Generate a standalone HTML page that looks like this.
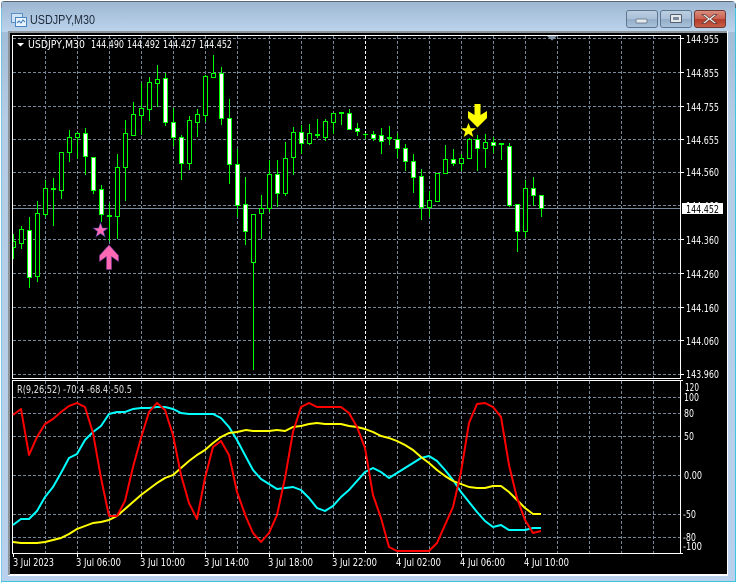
<!DOCTYPE html>
<html><head><meta charset="utf-8"><title>USDJPY,M30</title>
<style>html,body{margin:0;padding:0;background:#fff;width:738px;height:583px;overflow:hidden}svg{display:block}
text{font-family:"DejaVu Sans","Liberation Sans",sans-serif;font-size:10.5px;fill:#fff}</style></head>
<body>
<svg width="738" height="583" viewBox="0 0 738 583" xmlns="http://www.w3.org/2000/svg">
<defs>
<linearGradient id="t" x1="0" y1="0" x2="0" y2="1"><stop offset="0" stop-color="#9db8d3"/><stop offset="1" stop-color="#bdd3ec"/></linearGradient>
<linearGradient id="l" x1="0" y1="0" x2="0" y2="1"><stop offset="0" stop-color="#9db8d3"/><stop offset=".2" stop-color="#b5cce5"/><stop offset="1" stop-color="#b9d1ec"/></linearGradient>
<linearGradient id="b1" x1="0" y1="0" x2="0" y2="1"><stop offset="0" stop-color="#bccfe2"/><stop offset=".5" stop-color="#a9c0d8"/><stop offset=".52" stop-color="#93adc8"/><stop offset="1" stop-color="#aac3dc"/></linearGradient>
<linearGradient id="b2" x1="0" y1="0" x2="0" y2="1"><stop offset="0" stop-color="#dc8f80"/><stop offset=".5" stop-color="#c9604e"/><stop offset=".52" stop-color="#b33a28"/><stop offset="1" stop-color="#c9604a"/></linearGradient>
</defs>
<rect width="738" height="583" fill="#fff"/>
<path d="M1 583V5Q1 1.500 5 1.500H731Q735.500 1.500 735.500 6V581.500H1z" fill="url(#l)" stroke="#3fc3de" stroke-width="1"/>
<path d="M1 8V5Q1 1.500 5 1.500H731Q735.500 1.500 735.500 6V8" fill="none" stroke="#5c6670" stroke-width="1"/>
<rect x="1.500" y="2" width="733.500" height="30" fill="url(#t)"/>
<rect x="0" y="0" width="1" height="583" fill="#fff"/>
<!-- client -->
<rect x="8" y="31" width="720" height="545" fill="#fff"/>
<rect x="8" y="31" width="719" height="2" fill="#8c949c"/>
<rect x="8" y="31" width="2" height="544" fill="#8c949c"/>
<rect x="10" y="33" width="717" height="541" fill="#000"/>
<!-- title -->
<g>
<rect x="11.500" y="13.500" width="11" height="9" fill="#cfe3f5" stroke="#5c8fc4"/>
<rect x="15.500" y="17.500" width="11" height="9" fill="#e8f2fb" stroke="#4a86c4"/>
<path d="M17 23l2-2 2 2 2-3 2 2" fill="none" stroke="#3b78b8"/>
<text x="30" y="24" textLength="65" lengthAdjust="spacingAndGlyphs" style="font-family:'Liberation Sans',sans-serif;font-size:12.500px;fill:#1d2a3a">USDJPY,M30</text>
</g>
<!-- buttons -->
<rect x="626.500" y="10.500" width="31" height="17" rx="2.500" fill="url(#b1)" stroke="#5d7690"/>
<rect x="636" y="19" width="11" height="4" rx="1" fill="#e4e9ee" stroke="#5a6878" stroke-width=".7"/>
<rect x="660.500" y="10.500" width="31" height="17" rx="2.500" fill="url(#b1)" stroke="#5d7690"/>
<rect x="670.500" y="14.500" width="11" height="8" rx="1" fill="#e4e9ee" stroke="#54606c"/>
<rect x="673.500" y="17.500" width="5" height="2" fill="#7a8fa5" stroke="#54606c" stroke-width=".6"/>
<rect x="694.500" y="10.500" width="31" height="17" rx="2.500" fill="url(#b2)" stroke="#6e3a33"/>
<path d="M705 14.500l4.500 3.500 4.500-3.500h3l-5.500 4.500 5.500 4.500h-3l-4.500-3.500-4.500 3.500h-3l5.500-4.500-5.500-4.500z" fill="#f0f0f0" stroke="#5c3a36" stroke-width=".7"/>

<g shape-rendering="crispEdges">
<!-- main grid -->
<path d="M13 38.500H680M13 72.500H680M13 106.500H680M13 139.500H680M13 172.500H680M13 205.500H680M13 239.500H680M13 273.500H680M13 307.500H680M13 340.500H680M13 374.500H680" stroke="#778899" stroke-dasharray="3 2" fill="none"/>
<path d="M45.500 36V378M77.500 36V378M109.500 36V378M141.500 36V378M173.500 36V378M205.500 36V378M237.500 36V378M269.500 36V378M301.500 36V378M333.500 36V378M397.500 36V378M429.500 36V378M461.500 36V378M493.500 36V378M525.500 36V378M557.500 36V378M589.500 36V378M621.500 36V378M653.500 36V378" stroke="#778899" stroke-dasharray="3 2" fill="none"/>
<path d="M365.500 36V378" stroke="#fff" stroke-dasharray="3 2" fill="none"/>
<!-- sub grid -->
<path d="M13 397.500H680M13 413.500H680M13 436.500H680M13 475.500H680M13 514.500H680M13 537.500H680" stroke="#778899" stroke-dasharray="3 2" fill="none"/>
<path d="M45.500 381V553M77.500 381V553M109.500 381V553M141.500 381V553M173.500 381V553M205.500 381V553M237.500 381V553M269.500 381V553M301.500 381V553M333.500 381V553M397.500 381V553M429.500 381V553M461.500 381V553M493.500 381V553M525.500 381V553M557.500 381V553M589.500 381V553M621.500 381V553M653.500 381V553" stroke="#778899" stroke-dasharray="3 2" fill="none"/>
<path d="M365.500 381V553" stroke="#fff" stroke-dasharray="3 2" fill="none"/>
<!-- bid line -->
<path d="M13 208.500H680" stroke="#778899"/>
<!-- wicks -->
<path fill="none" stroke="#00ff00" d="M13.500 234V259M21.500 226V249M29.500 217V288M37.500 201V282M45.500 180V217M53.500 178V226M61.500 152V199M69.500 130V162M77.500 132V159M85.500 128V175M93.500 157V194M101.500 185V222M109.500 203V241M117.500 154V239M125.500 120V201M133.500 102V135M141.500 83V135M149.500 77V121M157.500 65V107M165.500 73V126M173.500 108V146M181.500 135V180M189.500 116V170M197.500 109V137M205.500 75V122M213.500 55V77M221.500 67V125M229.500 99V184M237.500 149V217M245.500 177V245M253.500 214V370M261.500 195V239M269.500 160V212M277.500 160V207M285.500 142V196M293.500 127V175M301.500 125V154M309.500 124V145M317.500 119V138M325.500 119V141M333.500 113V134M341.500 113V125M349.500 109V130M357.500 123V136M365.500 133V139M373.500 131V141M381.500 128V154M389.500 126V145M397.500 133V158M405.500 144V171M413.500 154V193M421.500 169V220M429.500 191V217M437.500 173V201M445.500 145V174M453.500 149V166M461.500 154V171M469.500 138V159M477.500 135V171M485.500 134V168M493.500 137V153M501.500 145V160M509.500 143V207M517.500 204V252M525.500 180V238M533.500 177V206M541.500 195V217"/>
<!-- doji dashes -->
<path fill="none" stroke="#00ff00" d="M107 215.500h5M107 216.500h5M315 135.500h5M315 134.500h5M339 112.500h5M339 113.500h5M363 134.500h5M387 138.500h5M387 137.500h5M499 144.500h5M499 143.500h5"/>
<path fill="none" stroke="#00ff00" d="M51 188.500h5M51 189.500h5"/>
<!-- hollow bodies -->
<path fill="#000" stroke="#00ff00" d="M13.500 241.500h2V247.500h-2M19.500 229.500h4V243.500h-4zM35.500 213.500h4V276.500h-4zM43.500 188.500h4V214.500h-4zM59.500 152.500h4V190.500h-4zM67.500 137.500h4V152.500h-4zM75.500 133.500h4V137.500h-4zM115.500 167.500h4V216.500h-4zM123.500 133.500h4V167.500h-4zM131.500 114.500h4V135.500h-4zM139.500 108.500h4V115.500h-4zM147.500 82.500h4V109.500h-4zM155.500 79.500h4V83.500h-4zM187.500 120.500h4V163.500h-4zM195.500 114.500h4V122.500h-4zM203.500 76.500h4V115.500h-4zM211.500 73.500h4V77.500h-4zM251.500 214.500h4V262.500h-4zM259.500 208.500h4V213.500h-4zM267.500 174.500h4V208.500h-4zM283.500 158.500h4V193.500h-4zM291.500 132.500h4V157.500h-4zM307.500 133.500h4V143.500h-4zM323.500 121.500h4V137.500h-4zM331.500 113.500h4V122.500h-4zM427.500 200.500h4V207.500h-4zM435.500 173.500h4V201.500h-4zM443.500 159.500h4V173.500h-4zM459.500 158.500h4V163.500h-4zM467.500 139.500h4V158.500h-4zM483.500 142.500h4V148.500h-4zM523.500 188.500h4V231.500h-4z"/>
<!-- white bodies -->
<path fill="#fff" stroke="#00ff00" d="M27.500 230.500h4V277.500h-4zM83.500 133.500h4V156.500h-4zM91.500 157.500h4V190.500h-4zM99.500 189.500h4V214.500h-4zM163.500 78.500h4V122.500h-4zM171.500 122.500h4V137.500h-4zM179.500 137.500h4V163.500h-4zM219.500 73.500h4V118.500h-4zM227.500 118.500h4V164.500h-4zM235.500 164.500h4V205.500h-4zM243.500 204.500h4V231.500h-4zM275.500 174.500h4V193.500h-4zM299.500 132.500h4V143.500h-4zM347.500 113.500h4V129.500h-4zM355.500 128.500h4V131.500h-4zM371.500 134.500h4V138.500h-4zM379.500 135.500h4V141.500h-4zM395.500 139.500h4V148.500h-4zM403.500 148.500h4V161.500h-4zM411.500 161.500h4V177.500h-4zM419.500 176.500h4V207.500h-4zM451.500 159.500h4V163.500h-4zM475.500 139.500h4V148.500h-4zM491.500 142.500h4V145.500h-4zM507.500 146.500h4V205.500h-4zM515.500 204.500h4V231.500h-4zM531.500 188.500h4V195.500h-4zM539.500 195.500h4V208.500h-4z"/>
<!-- frames -->
<path fill="none" stroke="#fff" d="M12.500 35.500H680.500V378.500H12.500zM12.500 380.500H680.500V553.500H12.500z"/>
<!-- ticks -->
<path fill="none" stroke="#fff" d="M681 38.500h3M681 72.500h3M681 106.500h3M681 139.500h3M681 172.500h3M681 239.500h3M681 273.500h3M681 307.500h3M681 340.500h3M681 374.500h3M681 380.500h2M681 553.500h2M13.500 554v3M77.500 554v3M141.500 554v3M205.500 554v3M269.500 554v3M333.500 554v3M397.500 554v3M461.500 554v3M525.500 554v3"/>
</g>
<!-- gray top marker -->
<path d="M547 36h10l-5 4.500z" fill="#8494a6"/>
<!-- indicators -->
<g fill="none" stroke-width="2" stroke-linejoin="round">
<polyline stroke="#00ffff" points="13,525 21,519 29,519 37,511 45,497 53,487 61,473 69,458 77,454 85,440 93,432 101,426 109,414 117,412 125,412 133,409 141,408 149,408 157,407 165,407 173,409 181,413 189,414 197,414 205,414 213,414 221,418 229,427 237,440 246,457 253,470 261,479 269,484 277,489 285,488 293,487 301,490 309,498 317,508 325,511 333,506 341,497 349,490 357,481 365,472 373,468 381,472 389,478 397,473 405,468 413,463 421,458 429,456 437,461 445,470 453,480 461,492 469,502 477,512 485,521 493,527 501,525 509,530 517,530 525,530 533,528 541,528"/>
<polyline stroke="#ffff00" points="13,542 21,543 29,543 37,543 45,542 53,540 61,538 69,534 77,529 85,526 93,523 101,522 109,520 117,516 125,509 133,502 141,495 149,489 157,483 165,478 173,475 181,468 189,461 197,455 205,450 213,443 221,437 229,433 237,432 246,430 253,431 261,431 269,431 277,430 285,431 293,427 301,426 309,424 317,423 325,424 333,424 341,424 349,426 357,427 365,429 373,432 381,436 389,438 397,441 405,445 413,450 421,457 429,463 437,470 445,476 453,481 461,484 469,487 477,488 485,488 493,486 501,486 509,492 517,500 525,508 533,514 541,514"/>
<polyline stroke="#ff0000" points="13,415 21,409 29,455 37,437 45,424 53,419 61,412 69,406 77,403 85,407 93,433 101,478 109,516 117,516 125,501 133,467 141,438 149,412 157,403 165,410 173,435 181,475 189,503 197,519 205,478 213,447 221,441 229,455 237,492 246,517 253,533 261,542 269,533 277,515 285,478 293,432 301,407 309,403 317,407 325,407 333,407 341,407 349,413 357,427 365,448 373,495 381,518 389,547 397,551 405,551 413,551 421,551 429,551 437,543 445,525 453,507 461,472 469,423 477,404 485,403 493,407 501,417 509,465 517,498 525,520 533,533 541,531"/>
</g>
<!-- markers -->
<polygon points="100.500,222.500 102.500,228 108,228 103.500,231.500 105.200,237 100.500,233.500 95.800,237 97.500,231.500 93,228 98.500,228" fill="#ff69b4" stroke="#3c3c9c" stroke-width=".6"/>
<polygon points="109,245 118.500,255.500 118.500,261.500 111.500,256.500 111.500,269.500 106.500,269.500 106.500,256.500 99.500,261.500 99.500,255.500" fill="#ff69b4" stroke="#7a3a9a" stroke-width=".6"/>
<polygon points="468.500,123 470.600,128.300 476,128.300 471.700,131.700 473.300,137 468.500,133.800 463.700,137 465.300,131.700 461,128.300 466.400,128.300" fill="#ffff00"/>
<polygon points="474.500,104 480.500,104 480.500,115 487,111 487,118 477.500,127.500 468,118 468,111 474.500,115" fill="#ffff00"/>
<!-- header -->
<path d="M17 43h7l-3.500 3.500z" fill="#fff"/>
<g>
<text x="28" y="48" textLength="57" lengthAdjust="spacingAndGlyphs">USDJPY,M30</text>
<text x="91" y="48" textLength="33" lengthAdjust="spacingAndGlyphs">144.490</text>
<text x="127" y="48" textLength="33" lengthAdjust="spacingAndGlyphs">144.492</text>
<text x="163" y="48" textLength="33" lengthAdjust="spacingAndGlyphs">144.427</text>
<text x="199" y="48" textLength="33" lengthAdjust="spacingAndGlyphs">144.452</text>
</g>
<!-- price labels -->
<g>
<text x="686" y="43" textLength="33" lengthAdjust="spacingAndGlyphs">144.955</text>
<text x="686" y="77" textLength="33" lengthAdjust="spacingAndGlyphs">144.855</text>
<text x="686" y="111" textLength="33" lengthAdjust="spacingAndGlyphs">144.755</text>
<text x="686" y="144" textLength="33" lengthAdjust="spacingAndGlyphs">144.655</text>
<text x="686" y="176" textLength="33" lengthAdjust="spacingAndGlyphs">144.560</text>
<text x="686" y="210" textLength="33" lengthAdjust="spacingAndGlyphs">144.460</text>
<text x="686" y="244" textLength="33" lengthAdjust="spacingAndGlyphs">144.360</text>
<text x="686" y="278" textLength="33" lengthAdjust="spacingAndGlyphs">144.260</text>
<text x="686" y="312" textLength="33" lengthAdjust="spacingAndGlyphs">144.160</text>
<text x="686" y="345" textLength="33" lengthAdjust="spacingAndGlyphs">144.060</text>
<text x="686" y="378" textLength="33" lengthAdjust="spacingAndGlyphs">143.960</text>
</g>
<rect x="682" y="203" width="41" height="11" fill="#fff"/>
<text x="686" y="213" textLength="33" lengthAdjust="spacingAndGlyphs" style="fill:#000">144.452</text>
<!-- sub labels -->
<text x="17" y="393" textLength="115" lengthAdjust="spacingAndGlyphs" style="fill:#e4e4e4">R(9,26,52) -70.4 -68.4 -50.5</text>
<g>
<text x="685" y="391" textLength="14" lengthAdjust="spacingAndGlyphs">120</text>
<text x="684" y="401" textLength="15" lengthAdjust="spacingAndGlyphs">100</text>
<text x="684" y="417" textLength="10" lengthAdjust="spacingAndGlyphs">80</text>
<text x="684" y="440" textLength="10" lengthAdjust="spacingAndGlyphs">50</text>
<text x="684" y="479" textLength="18" lengthAdjust="spacingAndGlyphs">0.00</text>
<text x="683" y="518" textLength="13" lengthAdjust="spacingAndGlyphs">-50</text>
<text x="683" y="541" textLength="13" lengthAdjust="spacingAndGlyphs">-80</text>
<text x="683" y="550" textLength="19" lengthAdjust="spacingAndGlyphs">-100</text>
</g>
<!-- time labels -->
<g>
<text x="13" y="566" textLength="41" lengthAdjust="spacingAndGlyphs">3 Jul 2023</text>
<text x="76" y="566" textLength="45" lengthAdjust="spacingAndGlyphs">3 Jul 06:00</text>
<text x="140" y="566" textLength="45" lengthAdjust="spacingAndGlyphs">3 Jul 10:00</text>
<text x="204" y="566" textLength="45" lengthAdjust="spacingAndGlyphs">3 Jul 14:00</text>
<text x="268" y="566" textLength="45" lengthAdjust="spacingAndGlyphs">3 Jul 18:00</text>
<text x="332" y="566" textLength="45" lengthAdjust="spacingAndGlyphs">3 Jul 22:00</text>
<text x="396" y="566" textLength="45" lengthAdjust="spacingAndGlyphs">4 Jul 02:00</text>
<text x="460" y="566" textLength="45" lengthAdjust="spacingAndGlyphs">4 Jul 06:00</text>
<text x="524" y="566" textLength="45" lengthAdjust="spacingAndGlyphs">4 Jul 10:00</text>
</g>
</svg>
</body></html>
